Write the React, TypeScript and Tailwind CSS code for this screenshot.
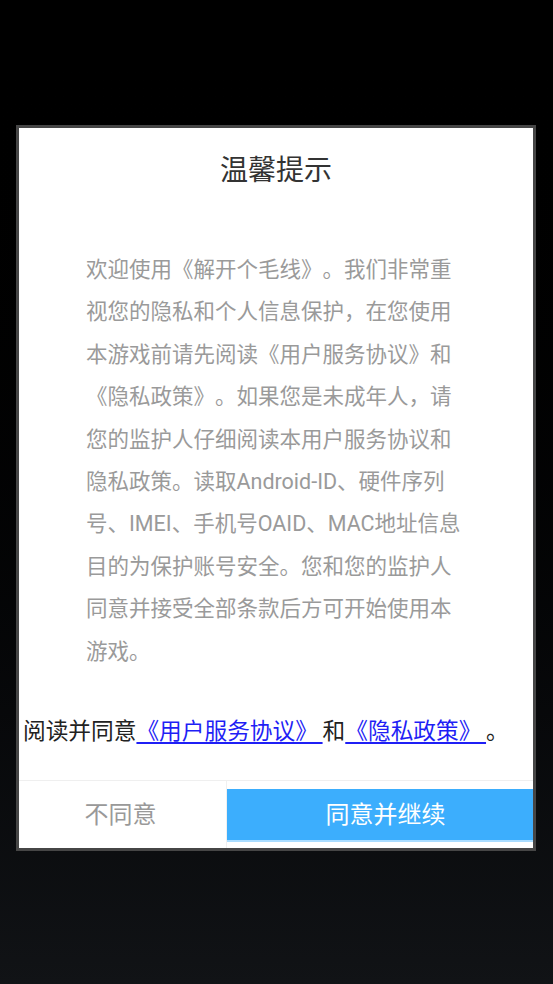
const FONT = "font-['Roboto','Noto_Sans_CJK_SC',sans-serif]";

// wrapped the way the reference wraps them
const BODY_LINES = [
  '欢迎使用《解开个毛线》。我们非常重',
  '视您的隐私和个人信息保护，在您使用',
  '本游戏前请先阅读《用户服务协议》和',
  '《隐私政策》。如果您是未成年人，请',
  '您的监护人仔细阅读本用户服务协议和',
  '隐私政策。读取Android-ID、硬件序列',
  '号、IMEI、手机号OAID、MAC地址信息',
  '目的为保护账号安全。您和您的监护人',
  '同意并接受全部条款后方可开始使用本',
  '游戏。',
];

export default function App() {
  return (
    <div
      className={`w-[553px] h-[984px] bg-gradient-to-b from-black to-[#111316] pt-[125px] pl-[16px] [text-spacing-trim:space-all] ${FONT}`}
    >
      <div className="w-[520px] border-[3px] border-[#464646] bg-white">
        <h1 className="pt-[25px] text-center text-[28px] leading-[36px] text-[#333]">温馨提示</h1>

        <div className="mt-[60px] ml-[67px] text-[21.5px] leading-[42.4px] text-[#9a9a9a]">
          {BODY_LINES.map((line) => (
            <p key={line} className="whitespace-nowrap">
              {line}
            </p>
          ))}
        </div>

        <p className="mt-[44px] pl-[4px] text-[22.7px] leading-[30px] text-[#222] whitespace-nowrap">
          阅读并同意
          <a className="text-[#1f1ff5] underline underline-offset-[3px]">{'《用户服务协议》\u2009'}</a>
          和
          <a className="text-[#1f1ff5] underline underline-offset-[3px]">{'《隐私政策》\u2009'}</a>
          。
        </p>

        <div className="mt-[33px] flex h-[68px] border-t border-[#efefef]">
          <button
            type="button"
            className="w-[208px] border-r border-[#f0f0f0] pr-[4px] text-[24px] text-[#999]"
          >
            不同意
          </button>
          <div className="flex-1 pt-[8px]">
            <button
              type="button"
              className="h-[53px] w-full border-b-2 border-[#a9dcff] bg-[#3caefd] pl-[11px] text-[24px] text-white"
            >
              同意并继续
            </button>
          </div>
        </div>
      </div>
    </div>
  );
}
